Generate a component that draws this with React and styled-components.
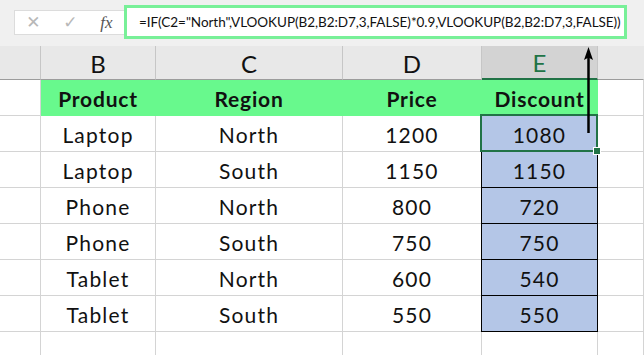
import React from 'react';
import styled, { createGlobalStyle } from 'styled-components';

const GlobalStyle = createGlobalStyle`
  html, body {
    margin: 0;
    padding: 0;
    background: #ffffff;
  }
  * {
    box-sizing: border-box;
  }
`

// whole sheet window
const Sheet = styled.div`
  position: relative;
  width: 644px;
  height: 355px;
  overflow: hidden;
  background: #ffffff;
  font-family: Lato, "Liberation Sans", sans-serif;
`

// formula bar
const FormulaBar = styled.div`
  display: flex;
  align-items: flex-start;
  height: 46px;
  padding: 5px 0 0 14px;
  background: #f0f0f0;
`

const EditButtons = styled.div`
  display: flex;
  align-items: center;
  justify-content: space-around;
  width: 110px;
  height: 25px;
  margin-top: 5px;
  background: #ffffff;
  border: 1px solid #dcdcdc;
  border-right: none;
  color: #b4b4b4;
`

const EditGlyph = styled.span`
  font-family: ${p => p.$serif ? '"Liberation Serif", serif' : '"DejaVu Sans", sans-serif'};
  font-style: ${p => p.$serif ? 'italic' : 'normal'};
  font-size: ${p => p.$size || 15}px;
  color: ${p => p.$dark ? '#555' : '#b8b8b8'};
  line-height: 1;
`

const FormulaBox = styled.div`
  display: flex;
  align-items: center;
  width: 503px;
  height: 34px;
  padding-left: 12px;
  background: #ffffff;
  border: 3px solid #78f098;
  font-size: 13.5px;
  letter-spacing: -0.05px;
  color: #111;
  white-space: nowrap;
  overflow: hidden;
`

// cell grid
const Grid = styled.div`
  display: grid;
  grid-template-columns: 41px 115px 187px 139px 116px 1fr;
  grid-auto-rows: 36px;
  grid-template-rows: 34px;
`

const HeadCell = styled.div`
  display: flex;
  align-items: center;
  justify-content: center;
  background: ${p => p.$active ? '#d3d3d3' : '#e8e8e8'};
  border-right: 1px solid ${p => p.$last ? 'transparent' : '#c6c6c6'};
  border-bottom: ${p => p.$active ? '2px solid #217346' : '1px solid #9c9c9c'};
  color: ${p => p.$active ? '#217346' : '#111'};
  font-size: 24px;
  padding-top: 1px;
`

const Cell = styled.div`
  position: relative;
  display: flex;
  align-items: center;
  justify-content: center;
  padding-top: 2px;
  background: ${p => p.$fill || '#ffffff'};
  border-right: 1px solid ${p => p.$line || '#d4d4d4'};
  border-bottom: 1px solid ${p => p.$line || '#d4d4d4'};
  box-shadow: ${p => p.$boxed ? '-1px 0 0 #000' : 'none'};
  font-size: 21px;
  font-weight: ${p => p.$bold ? 700 : 400};
  letter-spacing: ${p => p.$bold ? '0.8px' : '1.2px'};
  color: #111;

  ${p => p.$selected && `
    &::after {
      content: '';
      position: absolute;
      left: -2px;
      top: -2px;
      right: -1px;
      bottom: -1px;
      border: 2px solid #217346;
    }
    &::before {
      content: '';
      position: absolute;
      right: -4px;
      bottom: -4px;
      width: 6px;
      height: 6px;
      background: #217346;
      border: 1px solid #fff;
      z-index: 2;
    }
  `}
`

const Arrow = styled.svg`
  position: absolute;
  left: 582px;
  top: 46px;
`

const GREEN = '#68f98d';
const BLUE = '#b4c6e7';

const rows = [
  ['Laptop', 'North', '1200', '1080'],
  ['Laptop', 'South', '1150', '1150'],
  ['Phone', 'North', '800', '720'],
  ['Phone', 'South', '750', '750'],
  ['Tablet', 'North', '600', '540'],
  ['Tablet', 'South', '550', '550'],
];

export default function App() {
  return (
    <Sheet>
      <GlobalStyle />
      <FormulaBar>
        <EditButtons>
          <EditGlyph $size={17}>✕</EditGlyph>
          <EditGlyph $size={17}>✓</EditGlyph>
          <EditGlyph $serif $dark $size={17}>fx</EditGlyph>
        </EditButtons>
        <FormulaBox>
          =IF(C2="North",VLOOKUP(B2,B2:D7,3,FALSE)*0.9,VLOOKUP(B2,B2:D7,3,FALSE))
        </FormulaBox>
      </FormulaBar>

      <Grid>
        <HeadCell />
        <HeadCell>B</HeadCell>
        <HeadCell>C</HeadCell>
        <HeadCell>D</HeadCell>
        <HeadCell $active>E</HeadCell>
        <HeadCell $last />

        <Cell />
        <Cell $fill={GREEN} $line={GREEN} $bold>Product</Cell>
        <Cell $fill={GREEN} $line={GREEN} $bold>Region</Cell>
        <Cell $fill={GREEN} $line={GREEN} $bold>Price</Cell>
        <Cell $fill={GREEN} $line={GREEN} $bold>Discount</Cell>
        <Cell />

        {rows.map((r, i) => (
          <React.Fragment key={i}>
            <Cell />
            <Cell>{r[0]}</Cell>
            <Cell>{r[1]}</Cell>
            <Cell>{r[2]}</Cell>
            <Cell $fill={BLUE} $line="#000" $boxed $selected={i === 0}>{r[3]}</Cell>
            <Cell />
          </React.Fragment>
        ))}

        <Cell />
        <Cell />
        <Cell />
        <Cell />
        <Cell />
        <Cell />
      </Grid>

      <Arrow width="14" height="90" viewBox="0 0 14 90">
        <line x1="6.5" y1="10" x2="6.5" y2="87" stroke="#000" strokeWidth="2.5" />
        <path d="M6.5 1 L11 14 L6.5 11.5 L2 14 Z" fill="#000" />
      </Arrow>
    </Sheet>
  );
}
